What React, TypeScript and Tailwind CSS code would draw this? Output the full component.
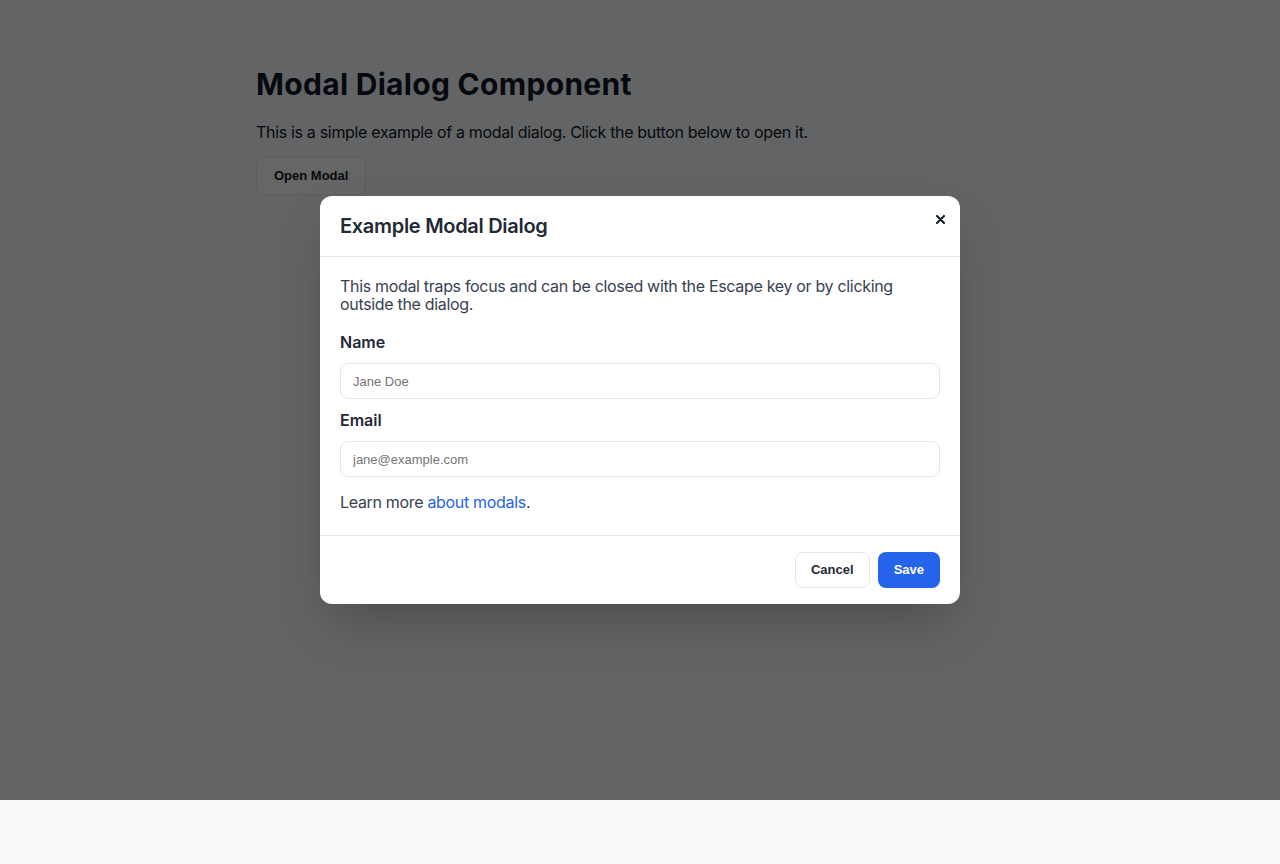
export default function App() {
  return (
    <main className="bg-[#f8fafc] min-h-screen text-[#111827] font-['Inter',sans-serif]">
      <div className="relative h-[800px]">
        {/* Page content */}
        <section className="max-w-3xl mx-auto pt-[66px]">
          <h1 className="text-3xl leading-9 font-bold text-[#111827] tracking-[0.01em]">
            Modal Dialog Component
          </h1>
          <p className="mt-[18px] text-base leading-6 text-[#111827] tracking-[-0.02em]">
            This is a simple example of a modal dialog. Click the button below to open it.
          </p>
          <button className="mt-[13px] h-[38px] px-[17px] rounded-lg border border-[#e5e7eb] bg-white text-[13px] font-bold text-[#111827] font-['Liberation_Sans',Arial,sans-serif]">
            Open Modal
          </button>
        </section>

        {/* Overlay */}
        <div className="absolute inset-0 bg-black/60 flex items-center justify-center">
          <div className="relative w-[640px] bg-white rounded-xl shadow-2xl">
            <button className="absolute top-[14px] right-[14px] w-3 h-[18px] flex items-center justify-center text-[#111827]">
              <svg width="9" height="9" viewBox="0 0 9 9" fill="none">
                <path d="M1 1L8 8M8 1L1 8" stroke="currentColor" strokeWidth="2" strokeLinecap="round" />
              </svg>
            </button>

            {/* Header */}
            <div className="px-5 py-4 border-b border-[#e5e7eb]">
              <h2 className="text-xl leading-7 font-semibold text-[#1f2937] tracking-[-0.015em]">
                Example Modal Dialog
              </h2>
            </div>

            {/* Body */}
            <div className="px-5 pt-5 pb-6 text-[#374151] text-base leading-[18px] tracking-[-0.02em]">
              <p>
                This modal traps focus and can be closed with the Escape key or by clicking outside
                the dialog.
              </p>
              <label className="block mt-5 mb-3 font-semibold text-[#1f2937] tracking-normal">Name</label>
              <input
                type="text"
                placeholder="Jane Doe"
                className="block w-full h-9 px-3 rounded-lg border border-[#e5e7eb] text-[13px] tracking-normal font-['Liberation_Sans',Arial,sans-serif] placeholder:text-[#757575] outline-none"
              />
              <label className="block mt-3 mb-3 font-semibold text-[#1f2937] tracking-normal">Email</label>
              <input
                type="email"
                placeholder="jane@example.com"
                className="block w-full h-9 px-3 rounded-lg border border-[#e5e7eb] text-[13px] tracking-normal font-['Liberation_Sans',Arial,sans-serif] placeholder:text-[#757575] outline-none"
              />
              <p className="mt-4">
                Learn more{" "}
                <a href="#" className="text-[#2563eb]">
                  about modals
                </a>
                .
              </p>
            </div>

            {/* Footer */}
            <div className="px-5 py-4 border-t border-[#e5e7eb] flex justify-end gap-2">
              <button className="h-9 px-[15px] rounded-lg border border-[#e5e7eb] bg-white text-[13px] font-bold text-[#1f2937] font-['Liberation_Sans',Arial,sans-serif]">
                Cancel
              </button>
              <button className="h-9 px-4 rounded-lg bg-[#2563eb] text-white text-[13px] font-bold font-['Liberation_Sans',Arial,sans-serif]">
                Save
              </button>
            </div>
          </div>
        </div>
      </div>
    </main>
  );
}
